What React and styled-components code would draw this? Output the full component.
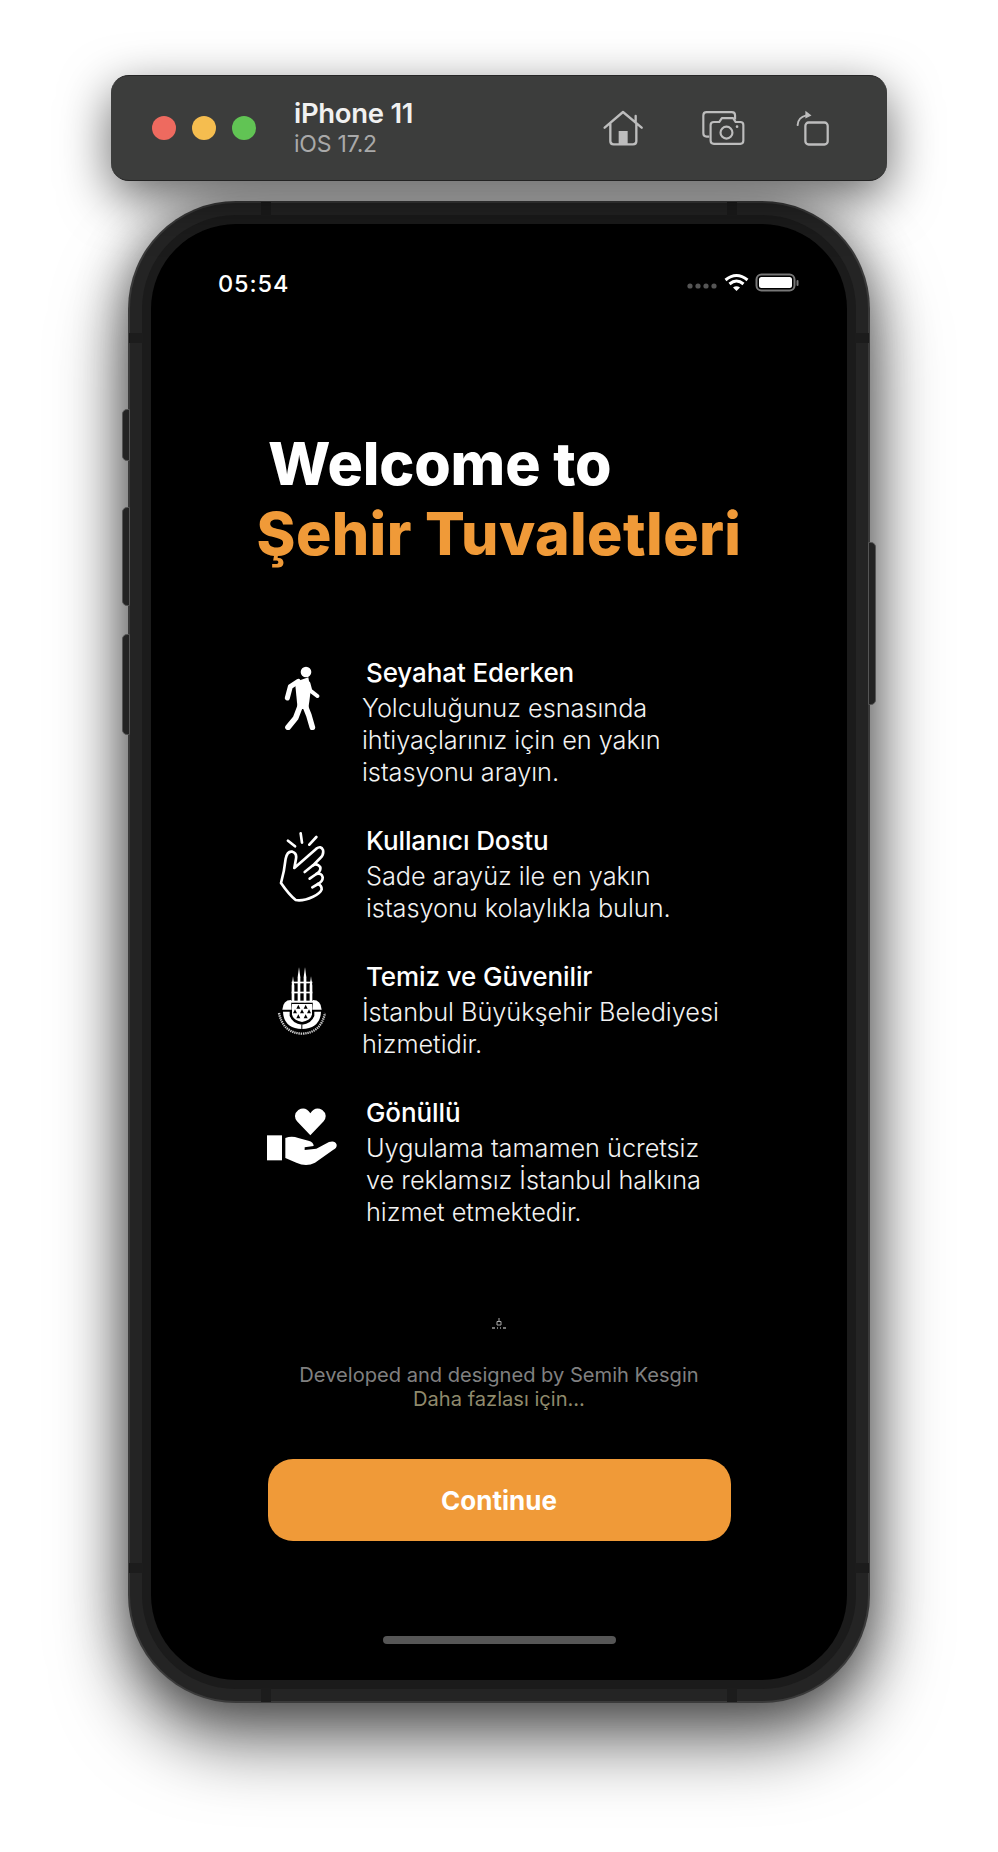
import React from "react";
import styled, { createGlobalStyle } from "styled-components";

const Global = createGlobalStyle`
  html, body { margin: 0; padding: 0; background: #fff; }
  * { box-sizing: border-box; }
  body { font-family: Inter, "Liberation Sans", sans-serif; }
`;

const Page = styled.div`
  width: 998px;
  height: 1852px;
  padding-top: 75px;
  display: flex;
  flex-direction: column;
  align-items: center;
  overflow: hidden;
  background: #fff;
`;

const Toolbar = styled.header`
  position: relative;
  z-index: 2;
  width: 776px;
  height: 106px;
  flex: none;
  margin-bottom: 20px;
  padding: 0 58px 0 41px;
  display: flex;
  align-items: center;
  background: #3c3d3c;
  border-radius: 18px;
  border-top: 1.5px solid #262626;
  border-bottom: 1px solid #222;
  box-shadow: 0 16px 50px rgba(0, 0, 0, 0.6);
`;

const Lights = styled.div`
  display: flex;
  gap: 16px;
`;

const Light = styled.span`
  width: 24px;
  height: 24px;
  border-radius: 50%;
  background: ${(p) => p.$color};
`;

const DeviceInfo = styled.div`
  margin-left: 38px;
  display: flex;
  flex-direction: column;
  flex: 1;
`;

const DeviceName = styled.div`
  margin-top: 2px;
  color: #f1f1f1;
  font-size: 27.5px;
  font-weight: 600;
  line-height: 31px;
  letter-spacing: -0.3px;
`;

const DeviceOs = styled.div`
  color: #a9a9a9;
  font-size: 23px;
  font-weight: 400;
  line-height: 31px;
  letter-spacing: -0.2px;
`;

const ToolIcon = styled.svg`
  display: block;
  flex: none;
  margin-left: ${(p) => p.$gap}px;
`;

const Phone = styled.div`
  position: relative;
  width: 742px;
  height: 1502px;
  flex: none;
  padding: 2px;
  background: #3a3a3a;
  border-radius: 108px;
  box-shadow: 0 38px 72px rgba(0, 0, 0, 0.6), 0 0 50px rgba(0, 0, 0, 0.42);
`;

const OuterBand = styled.div`
  height: 100%;
  padding: 12px;
  background: #242424;
  border-radius: 106px;
`;

const InnerBand = styled.div`
  height: 100%;
  padding: 9px;
  background: #1b1b1b;
  border-radius: 94px;
`;

const Screen = styled.main`
  height: 100%;
  background: #000;
  border-radius: 85px;
  overflow: hidden;
  display: flex;
  flex-direction: column;
`;

const Notch = styled.span`
  position: absolute;
  background: #1c1c1c;
  ${(p) => p.$css}
`;

const SideButton = styled.span`
  position: absolute;
  width: 8px;
  background: #232323;
  border: 1px solid #555;
  ${(p) => (p.$right ? "right: -6px; border-radius: 0 5px 5px 0;" : "left: -6px; border-radius: 5px 0 0 5px;")}
  top: ${(p) => p.$top}px;
  height: ${(p) => p.$height}px;
`;

const StatusBar = styled.div`
  margin-top: 45px;
  height: 28px;
  flex: none;
  padding: 0 48px 0 67px;
  display: flex;
  align-items: center;
  justify-content: space-between;
`;

const Clock = styled.span`
  color: #fff;
  font-size: 23.5px;
  font-weight: 500;
  letter-spacing: 0.9px;
`;

const StatusIcons = styled.svg`
  display: block;
`;

const WelcomeLine = styled.h1`
  margin: 132px 0 0;
  padding-left: 117px;
  color: #fff;
  font-size: 59px;
  font-weight: 800;
  line-height: 70px;
  letter-spacing: -0.15px;
`;

const BrandLine = styled.div`
  text-align: center;
  color: #f09a38;
  font-size: 59px;
  font-weight: 800;
  line-height: 70px;
  letter-spacing: 0.38px;
`;

const Features = styled.section`
  margin-top: 86px;
  padding-left: 116px;
  display: flex;
  flex-direction: column;
  gap: 35px;
`;

const Feature = styled.article`
  display: flex;
  align-items: flex-start;
`;

const IconSlot = styled.div`
  width: 70px;
  flex: none;
  display: flex;
  justify-content: center;
  margin-top: ${(p) => p.$top}px;
`;

const FeatureText = styled.div`
  margin-left: ${(p) => p.$left}px;
`;

const FeatureTitle = styled.div`
  padding-left: ${(p) => p.$indent}px;
  color: #fff;
  font-size: 26px;
  font-weight: 550;
  line-height: 36px;
  letter-spacing: -0.1px;
`;

const FeatureBody = styled.div`
  margin-top: 1px;
  color: #f2f2f2;
  font-size: 25.3px;
  font-weight: 300;
  line-height: 32px;
  letter-spacing: -0.03px;
  white-space: pre-line;
`;

const TinyMark = styled.svg`
  display: block;
  margin: 90px auto 0;
`;

const Credit = styled.div`
  margin-top: 33px;
  text-align: center;
  font-size: 20.1px;
  line-height: 24px;
  color: #808080;
`;

const MoreLink = styled.div`
  color: #8f8a6c;
`;

const ContinueButton = styled.button`
  display: block;
  width: 463px;
  height: 82px;
  margin: 48px auto 0;
  border: 0;
  border-radius: 25px;
  background: #f09a38;
  color: #fff;
  font-family: Inter, sans-serif;
  font-size: 26px;
  font-weight: 700;
`;

const HomeIndicator = styled.div`
  width: 233px;
  height: 8px;
  margin: 95px auto 0;
  border-radius: 4px;
  background: #565656;
`;

const Walker = () => (
  <svg width="36" height="64" viewBox="103 76 108 192">
    <circle cx="169" cy="94" r="16" fill="#fff" />
    <path d="M136 124 L176 110 L183 150 L176 205 L144 205 Z" fill="#fff" />
    <g fill="none" stroke="#fff" strokeLinecap="round" strokeLinejoin="round">
      <path d="M146 122 L122 138 L113 172" strokeWidth="15" />
      <path d="M176 128 L182 150 L203 166" strokeWidth="12" />
      <path d="M152 195 L138 232 L115 260" strokeWidth="17" />
      <path d="M166 195 L178 225 L188 260" strokeWidth="17" />
    </g>
  </svg>
);

const SnapHand = () => (
  <svg width="46" height="70" viewBox="88 572 138 210">
    <g fill="none" stroke="#fff" strokeWidth="8" strokeLinecap="round" strokeLinejoin="round">
      <path d="M115 598 L136 615 M153 576 L157 604 M200 587 L179 610" />
      <path d="M94 725 Q104 690 108 652 Q113 628 128 631 Q142 635 139 652 L134 680 L200 622 Q214 612 220 626 Q223 640 212 650 L190 672 Q202 664 212 678 Q214 690 200 698 Q216 694 219 708 Q220 720 205 728 Q216 732 216 744 Q212 756 190 766 Q160 780 138 776 Q118 760 94 725 Z" />
      <path d="M165 692 L190 672 M180 712 L200 698 M188 738 L205 728" />
    </g>
  </svg>
);

const CityLogo = () => (
  <svg width="50" height="68" viewBox="82 84 150 204">
    <g fill="#fff">
      <path d="M148 85 L152 115 V190 H144 V115 Z" />
      <path d="M166 85 L170 115 V190 H162 V115 Z" />
      <path d="M130 112 L134 140 V190 H126 V140 Z" />
      <path d="M184 112 L188 140 V190 H180 V140 Z" />
      <rect x="126" y="128" width="62" height="5" />
      <rect x="126" y="158" width="62" height="5" />
      <rect x="124" y="185" width="66" height="6" />
      <path d="M98 212 Q100 183 124 183 L126 212 Z" />
      <path d="M216 212 Q214 183 190 183 L188 212 Z" />
      <path d="M100 218 H120 V230 Q128 254 157 257 Q186 254 194 230 V218 H214 Q212 268 157 270 Q102 268 100 218 Z" />
      <path d="M127 195 H187 V226 Q184 244 157 249 Q130 244 127 226 Z" />
    </g>
    <g fill="#000">
      <path d="M146 197 L152 209 H140 Z M168 197 L174 209 H162 Z" />
      <path d="M136 211 L142 223 H130 Z M157 211 L163 223 H151 Z M178 211 L184 223 H172 Z" />
      <path d="M146 226 L152 238 H140 Z M168 226 L174 238 H162 Z" />
      <rect x="155" y="257" width="3" height="14" />
    </g>
    <path d="M88 222 Q100 282 157 284 Q214 282 226 222" fill="none" stroke="#cfcfcf" strokeWidth="7" strokeDasharray="4 2.5" />
  </svg>
);

const HeartHand = () => (
  <svg width="70" height="58" viewBox="52 508 210 174">
    <g fill="#fff">
      <path d="M182 590 L142 548 Q128 528 146 514 Q168 502 182 524 Q196 502 218 514 Q236 528 222 548 Z" />
      <rect x="52" y="590" width="45" height="75" />
      <path d="M107 598 Q126 590 146 598 L176 606 Q192 610 192 622 L165 626 L165 634 L200 630 L238 610 Q256 604 261 618 Q262 628 250 634 L196 672 Q170 686 140 672 L107 658 Z" />
    </g>
  </svg>
);

export default function App() {
  return (
    <Page>
      <Global />
      <Toolbar>
        <Lights>
          <Light $color="#ee6a5f" />
          <Light $color="#f5bd4f" />
          <Light $color="#61c454" />
        </Lights>
        <DeviceInfo>
          <DeviceName>iPhone 11</DeviceName>
          <DeviceOs>iOS 17.2</DeviceOs>
        </DeviceInfo>
        <ToolIcon width="40" height="36" viewBox="40 52 120 108" $gap={0}>
          <g fill="none" stroke="#bdbdbd" strokeWidth="7" strokeLinecap="round" strokeLinejoin="round">
            <path d="M45 105 L100 58 L156 105 M138 70 V90 M62 92 V146 Q62 155 72 155 H130 Q140 155 140 146 V92" />
          </g>
          <rect x="87" y="115" width="27" height="40" fill="#bdbdbd" />
        </ToolIcon>
        <ToolIcon width="43" height="36" viewBox="336 56 130 108" $gap={59}>
          <g fill="none" stroke="#bdbdbd" strokeWidth="6.5" strokeLinejoin="round">
            <path d="M358 136 H350 Q340 136 340 126 V72 Q340 62 350 62 H426 Q436 62 436 72 V84" />
            <path d="M372 92 H388 L396 80 H430 L438 92 H452 Q461 92 461 101 V148 Q461 158 452 158 H372 Q362 158 362 148 V101 Q362 92 372 92 Z" />
            <circle cx="410" cy="124" r="18" />
          </g>
          <circle cx="442" cy="106" r="4" fill="#bdbdbd" />
        </ToolIcon>
        <ToolIcon width="33" height="36" viewBox="616 46 102 110" $gap={51}>
          <path d="M621 92 Q622 68 648 62" fill="none" stroke="#bdbdbd" strokeWidth="6" strokeLinecap="round" />
          <path d="M645 48 L664 62 L645 72 Z" fill="#bdbdbd" />
          <rect x="645" y="84" width="69" height="68" rx="10" fill="none" stroke="#bdbdbd" strokeWidth="7" />
        </ToolIcon>
      </Toolbar>

      <Phone>
        <SideButton $top={208} $height={52} />
        <SideButton $top={306} $height={99} />
        <SideButton $top={433} $height={101} />
        <SideButton $right $top={341} $height={163} />
        <Notch $css="top: 1px; left: 133px; width: 10px; height: 14px;" />
        <Notch $css="top: 1px; right: 133px; width: 10px; height: 14px;" />
        <Notch $css="bottom: 1px; left: 133px; width: 10px; height: 14px;" />
        <Notch $css="bottom: 1px; right: 133px; width: 10px; height: 14px;" />
        <Notch $css="top: 132px; left: 1px; width: 14px; height: 10px;" />
        <Notch $css="top: 132px; right: 1px; width: 14px; height: 10px;" />
        <Notch $css="bottom: 130px; left: 1px; width: 14px; height: 10px;" />
        <Notch $css="bottom: 130px; right: 1px; width: 14px; height: 10px;" />
        <OuterBand>
          <InnerBand>
            <Screen>
              <StatusBar>
                <Clock>05:54</Clock>
                <StatusIcons width="112" height="20" viewBox="0 0 112 20">
                  <g fill="#555">
                    <circle cx="3" cy="13" r="2.6" />
                    <circle cx="11" cy="13" r="2.6" />
                    <circle cx="19" cy="13" r="2.6" />
                    <circle cx="27" cy="13" r="2.6" />
                  </g>
                  <g fill="none" stroke="#fff" strokeWidth="3">
                    <path d="M38.5 7 Q49.5 -2 60.5 7" />
                    <path d="M42.5 11 Q49.5 5 56.5 11" />
                  </g>
                  <path d="M46 14.5 Q49.5 12 53 14.5 L49.5 18 Z" fill="#fff" />
                  <rect x="69.5" y="1.5" width="38" height="16" rx="5" fill="none" stroke="#777" strokeWidth="2" />
                  <rect x="72" y="4" width="33" height="11" rx="2.5" fill="#fff" />
                  <rect x="109.5" y="7" width="2" height="6" rx="1" fill="#777" />
                </StatusIcons>
              </StatusBar>

              <WelcomeLine>Welcome to</WelcomeLine>
              <BrandLine>Şehir Tuvaletleri</BrandLine>

              <Features>
                <Feature>
                  <IconSlot $top={11}><Walker /></IconSlot>
                  <FeatureText $left={25}>
                    <FeatureTitle $indent={4}>Seyahat Ederken</FeatureTitle>
                    <FeatureBody>{"Yolculuğunuz esnasında\nihtiyaçlarınız için en yakın\nistasyonu arayın."}</FeatureBody>
                  </FeatureText>
                </Feature>
                <Feature>
                  <IconSlot $top={9}><SnapHand /></IconSlot>
                  <FeatureText $left={29}>
                    <FeatureTitle $indent={0}>Kullanıcı Dostu</FeatureTitle>
                    <FeatureBody>{"Sade arayüz ile en yakın\nistasyonu kolaylıkla bulun."}</FeatureBody>
                  </FeatureText>
                </Feature>
                <Feature>
                  <IconSlot $top={8}><CityLogo /></IconSlot>
                  <FeatureText $left={25}>
                    <FeatureTitle $indent={4}>Temiz ve Güvenilir</FeatureTitle>
                    <FeatureBody>{"İstanbul Büyükşehir Belediyesi\nhizmetidir."}</FeatureBody>
                  </FeatureText>
                </Feature>
                <Feature>
                  <IconSlot $top={13}><HeartHand /></IconSlot>
                  <FeatureText $left={29}>
                    <FeatureTitle $indent={0}>Gönüllü</FeatureTitle>
                    <FeatureBody>{"Uygulama tamamen ücretsiz\nve reklamsız İstanbul halkına\nhizmet etmektedir."}</FeatureBody>
                  </FeatureText>
                </Feature>
              </Features>

              <TinyMark width="14" height="12" viewBox="0 0 14 12">
                <path d="M7 0 V3 M5 3.5 H9 V7 H5 Z" stroke="#aaa" strokeWidth="1" fill="none" />
                <path d="M0 10 H3 M5 10 H6 M8 10 H9 M11 10 H14" stroke="#999" strokeWidth="1.4" />
              </TinyMark>

              <Credit>
                Developed and designed by Semih Kesgin
                <MoreLink>Daha fazlası için...</MoreLink>
              </Credit>

              <ContinueButton>Continue</ContinueButton>
              <HomeIndicator />
            </Screen>
          </InnerBand>
        </OuterBand>
      </Phone>
    </Page>
  );
}
